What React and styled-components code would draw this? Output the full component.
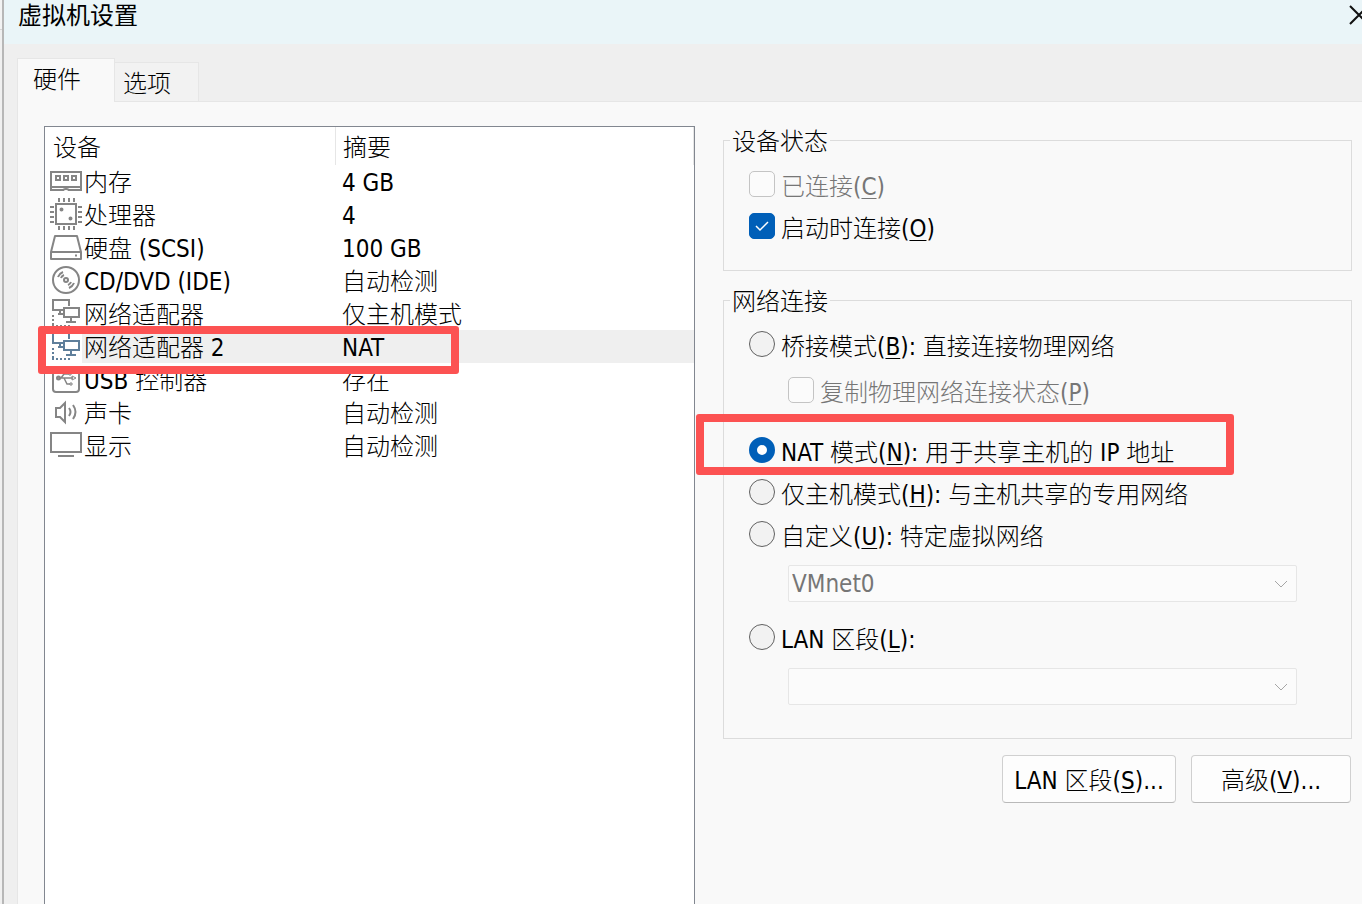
import React, { useState } from "react";
import styled, { createGlobalStyle, ThemeProvider } from "styled-components";

const theme = {
  text: "#000000",
  disabled: "#767676",
  icon: "#858585",
  iconActive: "#5f7f9b",
  accent: "#005fb8",
  panel: "#f9f9f9",
  chrome: "#efefef",
  line: "#dcdcdc",
  softLine: "#e6e6e6",
  mark: "#fc5252"
};

const GlobalStyle = createGlobalStyle`
  * {
    box-sizing: border-box;
  }
  body {
    margin: 0;
    color: ${theme.text};
    font-family: "Noto Sans CJK SC Light", "Noto Sans CJK SC", sans-serif;
    font-size: 24px;
    font-weight: 300;
    line-height: 32px;
  }
  button, select, input {
    font: inherit;
    color: inherit;
  }
`;

const Desktop = styled.div`
  display: flex;
  min-height: 100vh;
  background: #f0f0f0;
  overflow: hidden;
`;
const Backdrop = styled.div`
  width: 2px;
  height: 30px;
  background: #f3f3f3;
  border-bottom: 1px solid #d6d6d6;
`;
const Dialog = styled.main`
  display: flex;
  flex-direction: column;
  flex: 1;
  min-width: 0;
  border-left: 2px solid #b7b7b7;
  background: ${({ theme }) => theme.chrome};
`;
const TitleBar = styled.header`
  display: flex;
  align-items: flex-start;
  justify-content: space-between;
  height: 44px;
  padding-left: 14px;
  background: #eaf5f8;
`;
const Title = styled.h1`
  margin: 0;
  font-family: "Noto Sans CJK SC", sans-serif;
  font-size: 24px;
  font-weight: 400;
  line-height: 28px;
`;
const CloseButton = styled.button`
  display: flex;
  margin: 5px -7px 0 0;
  padding: 0;
  border: 0;
  background: none;
`;

const Tabs = styled.div`
  display: flex;
  align-items: flex-end;
  height: 57px;
  padding-left: 13px;
`;
const Tab = styled.button`
  position: relative;
  width: ${({ $active }) => ($active ? "98px" : "84px")};
  height: ${({ $active }) => ($active ? "44px" : "39px")};
  margin-bottom: ${({ $active }) => ($active ? "-1px" : "0")};
  padding: ${({ $active }) => ($active ? "0 0 5px 15px" : "0 0 0 8px")};
  border: 1px solid ${({ theme }) => theme.softLine};
  border-left-width: ${({ $active }) => ($active ? "1px" : "0")};
  border-bottom: 0;
  background: ${({ $active, theme }) => ($active ? theme.panel : "#f2f2f2")};
  text-align: left;
`;
const TabPanel = styled.section`
  display: grid;
  grid-template-columns: minmax(0, 651fr) minmax(0, 629fr);
  column-gap: 28px;
  flex: 1;
  margin-left: 13px;
  padding: 0 10px 0 26px;
  border: 1px solid ${({ theme }) => theme.softLine};
  border-width: 1px 0 0 1px;
  background: ${({ theme }) => theme.panel};
`;

const DeviceList = styled.div`
  margin-top: 24px;
  border: 1px solid #828790;
  border-bottom: 0;
  background: #ffffff;
`;
const DeviceTable = styled.table`
  width: 100%;
  border-collapse: separate;
  border-spacing: 0;
  table-layout: fixed;
`;
const HeadCell = styled.th`
  width: ${({ $width }) => $width || "auto"};
  height: 38px;
  padding: 0 0 0 ${({ $indent }) => $indent || "7px"};
  border-right: 1px solid ${({ theme }) => theme.softLine};
  font-weight: inherit;
  text-align: left;
`;
const DeviceCell = styled.td`
  position: relative;
  height: 33px;
  padding: 0 0 0 5px;
`;
const DeviceName = styled.div`
  display: flex;
  align-items: flex-start;
  height: 33px;
  white-space: nowrap;
`;
const DeviceLabel = styled.span`
  flex: 1;
  height: 33px;
  padding-left: 2px;
  background: ${({ $selected, theme }) => ($selected ? theme.chrome : "none")};
  line-height: 31px;
`;
const SummaryCell = styled.td`
  height: 33px;
  padding: 0 0 2px 6px;
  background: ${({ $selected, theme }) => ($selected ? theme.chrome : "none")};
  line-height: 31px;
`;
const Icon = styled.svg`
  flex: none;
  width: 32px;
  height: 32px;
  fill: none;
  stroke: ${({ $selected, theme }) =>
    $selected ? theme.iconActive : theme.icon};
  stroke-width: 2;
`;

const Settings = styled.div`
  display: flex;
  flex-direction: column;
  gap: 13px;
  padding-top: 22px;
`;
const Group = styled.fieldset`
  min-width: 0;
  margin: 0;
  padding: 0 54px ${({ $bottom }) => $bottom} 6px;
  border: 1px solid ${({ theme }) => theme.line};
`;
const Legend = styled.legend`
  height: 32px;
  padding: 0 2px;
`;
const GroupBody = styled.div`
  padding: 7px 0 0 19px;
`;
const Option = styled.div`
  position: relative;
  display: flex;
  align-items: center;
  height: 42px;
  margin-top: ${({ $gap }) => $gap || "0"};
  padding-left: ${({ $nested }) => ($nested ? "39px" : "0")};
  color: ${({ $disabled, theme }) => ($disabled ? theme.disabled : "inherit")};
  white-space: nowrap;

  label {
    padding: 2px 0 0 6px;
  }
`;
const Radio = styled.input.attrs({ type: "radio" })`
  appearance: none;
  flex: none;
  width: 26px;
  height: 26px;
  margin: 0;
  border: 1px solid #616161;
  border-radius: 50%;
  background: #f2f2f2;

  &:checked {
    border: 8px solid ${({ theme }) => theme.accent};
    background: #ffffff;
  }
`;
const CheckWrap = styled.span`
  display: grid;
  flex: none;

  > * {
    grid-area: 1 / 1;
  }
  svg {
    pointer-events: none;
  }
`;
const Checkbox = styled.input.attrs({ type: "checkbox" })`
  appearance: none;
  width: 26px;
  height: 26px;
  margin: 0;
  border: 1px solid #8a8a8a;
  border-radius: 5px;
  background: #fbfbfb;

  &:disabled {
    border-color: #c4c4c4;
  }
  &:checked {
    border-color: ${({ theme }) => theme.accent};
    background: ${({ theme }) => theme.accent};
  }
`;
const SelectWrap = styled.div`
  display: grid;
  align-items: center;
  margin: 10px 0 ${({ $bottom }) => $bottom || "0"} 39px;

  > * {
    grid-area: 1 / 1;
  }
  svg {
    justify-self: end;
    margin-right: 9px;
    pointer-events: none;
  }
`;
const Select = styled.select`
  appearance: none;
  width: 100%;
  height: 37px;
  padding: 1px 32px 0 3px;
  border: 1px solid ${({ theme }) => theme.softLine};
  border-radius: 2px;
  background: #fbfbfb;
  color: ${({ theme }) => theme.disabled};
  font-family: "DejaVu Sans Condensed", "DejaVu Sans", sans-serif;
  font-weight: 400;
  opacity: 1;
`;
const Actions = styled.div`
  display: flex;
  justify-content: flex-end;
  gap: 15px;
  margin-top: 3px;
  padding-right: 1px;
`;
const ActionButton = styled.button`
  width: ${({ $width }) => $width};
  height: 48px;
  padding: 0;
  border: 1px solid #d0d0d0;
  border-bottom-color: #b9b9b9;
  border-radius: 4px;
  background: #fdfdfd;
  white-space: nowrap;
`;
const Mark = styled.span`
  position: absolute;
  z-index: 1;
  top: ${({ $top }) => $top};
  left: ${({ $left }) => $left};
  width: ${({ $width }) => $width};
  height: ${({ $height }) => $height};
  border: 8px solid ${({ theme }) => theme.mark};
  border-radius: 3px;
  pointer-events: none;
`;
const Latin = styled.span`
  font-family: "DejaVu Sans Condensed", "DejaVu Sans", sans-serif;
  font-weight: 400;
  line-height: 1;
`;
const Mnemonic = styled.u`
  text-decoration-thickness: 1px;
  text-underline-offset: 3px;
`;

// "&X" marks X as the access key, as in Windows resource strings
const Caption = ({ text }) =>
  text.split(/([\x20-\x7e]+)/).map((run, i) => {
    if (!run || i % 2 === 0) return run;
    const [before, after] = run.split("&");
    return (
      <Latin key={i}>
        {before}
        {after && <Mnemonic>{after[0]}</Mnemonic>}
        {after && after.slice(1)}
      </Latin>
    );
  });

const icons = {
  memory: (
    <>
      <path d="M13 25H1V7h30v18H19" />
      <path d="M6 11h4v4H6zM14 11h4v4h-4zM22 11h4v4h-4z" />
      <path d="M2 22h28M13 26q0-2 3-2t3 2" />
    </>
  ),
  cpu: (
    <>
      <path d="M6 6h20v20H6z" />
      <path d="M9 0v4M14 0v4M19 0v4M24 0v4M9 28v4M14 28v4M19 28v4M24 28v4" />
      <path d="M0 9h4M0 14h4M0 19h4M0 24h4M28 9h4M28 14h4M28 19h4M28 24h4" />
      <circle cx="11.500" cy="11.500" r="1" />
      <circle cx="20.500" cy="20.500" r="1" />
    </>
  ),
  disk: (
    <path d="M5 5h22l4 16v7H1v-7zM1 21h30M25 24.500h2" strokeLinejoin="round" />
  ),
  disc: (
    <>
      <circle cx="16" cy="16" r="13" />
      <circle cx="16" cy="16" r="2" />
      <path d="M8 13a9 9 0 015-5M24 19a9 9 0 01-5 5M11 14a5 5 0 013-3M21 18a5 5 0 01-3 3" />
    </>
  ),
  network: (
    <>
      <path d="M13 13H3V3h16v6M10 13v4M8 17h7" />
      <path d="M14 11h15v9H14zM21 20v5M16 25h10" />
      <path d="M3 18v12M2 29h18" strokeDasharray="2 2" />
    </>
  ),
  usb: (
    <>
      <rect x="3" y="4" width="26" height="25" rx="3" />
      <path d="M8 15h15M11 15l3-4h5M14 15l3 6h3" strokeWidth="1.500" />
      <path d="M22 13l4 2-4 2zM19 10h2v2h-2zM20 20h2v2h-2z" strokeWidth="1" />
      <circle cx="8.500" cy="15" r="1.500" />
    </>
  ),
  sound: (
    <>
      <path d="M6 12h4l5-5v19l-5-5H6z" />
      <path d="M19 12q3 4 0 8M23 9q5 7 0 14" />
    </>
  ),
  display: (
    <>
      <path d="M1 4h30v19H1z" />
      <path d="M8 27h16" />
    </>
  )
};

const devices = [
  { icon: "memory", name: "内存", summary: "4 GB" },
  { icon: "cpu", name: "处理器", summary: "4" },
  { icon: "disk", name: "硬盘 (SCSI)", summary: "100 GB" },
  { icon: "disc", name: "CD/DVD (IDE)", summary: "自动检测" },
  { icon: "network", name: "网络适配器", summary: "仅主机模式" },
  { icon: "network", name: "网络适配器 2", summary: "NAT", selected: true },
  { icon: "usb", name: "USB 控制器", summary: "存在" },
  { icon: "sound", name: "声卡", summary: "自动检测" },
  { icon: "display", name: "显示", summary: "自动检测" }
];

const Device = ({ icon, name, summary, selected }) => (
  <tr aria-selected={selected}>
    <DeviceCell>
      <DeviceName>
        <Icon viewBox="0 0 32 32" $selected={selected} aria-hidden="true">
          {icons[icon]}
        </Icon>
        <DeviceLabel $selected={selected}>
          <Caption text={name} />
        </DeviceLabel>
      </DeviceName>
      {selected && <Mark $top="-4px" $left="-7px" $width="421px" $height="48px" />}
    </DeviceCell>
    <SummaryCell $selected={selected}>
      <Caption text={summary} />
    </SummaryCell>
  </tr>
);

const CheckOption = ({ id, text, checked, onChange, disabled, gap, nested }) => (
  <Option $disabled={disabled} $gap={gap} $nested={nested}>
    <CheckWrap>
      <Checkbox id={id} checked={checked} onChange={onChange} disabled={disabled} />
      {checked && (
        <svg width="26" height="26" fill="none" stroke="#ffffff" strokeWidth="1.500">
          <path d="M7 13l4 4 8-8" />
        </svg>
      )}
    </CheckWrap>
    <label htmlFor={id}>
      <Caption text={text} />
    </label>
  </Option>
);

const RadioOption = ({ id, text, mode, setMode, gap, children }) => (
  <Option $gap={gap}>
    <Radio id={id} name="mode" checked={mode === id} onChange={() => setMode(id)} />
    <label htmlFor={id}>
      <Caption text={text} />
    </label>
    {children}
  </Option>
);

const Dropdown = ({ label, value, bottom }) => (
  <SelectWrap $bottom={bottom}>
    <Select aria-label={label} disabled>
      <option>{value}</option>
    </Select>
    <svg width="14" height="8" fill="none" stroke="#a6a6a6" aria-hidden="true">
      <path d="M1 1l6 6 6-6" />
    </svg>
  </SelectWrap>
);

const App = () => {
  const [mode, setMode] = useState("nat");
  const [autoConnect, setAutoConnect] = useState(true);
  return (
    <ThemeProvider theme={theme}>
      <GlobalStyle />
      <Desktop>
        <Backdrop />
        <Dialog>
          <TitleBar>
            <Title>虚拟机设置</Title>
            <CloseButton aria-label="关闭">
              <svg width="20" height="20" fill="none" stroke="#111111" strokeWidth="2">
                <path d="M1 1l18 18M19 1L1 19" />
              </svg>
            </CloseButton>
          </TitleBar>
          <Tabs role="tablist">
            <Tab role="tab" aria-selected="true" $active>
              硬件
            </Tab>
            <Tab role="tab" aria-selected="false">
              选项
            </Tab>
          </Tabs>
          <TabPanel role="tabpanel">
            <DeviceList>
              <DeviceTable>
                <thead>
                  <tr>
                    <HeadCell $width="291px" $indent="8px">设备</HeadCell>
                    <HeadCell>摘要</HeadCell>
                  </tr>
                </thead>
                <tbody>
                  {devices.map(device => (
                    <Device key={device.name} {...device} />
                  ))}
                </tbody>
              </DeviceTable>
            </DeviceList>
            <Settings>
              <Group $bottom="23px">
                <Legend>设备状态</Legend>
                <GroupBody>
                  <CheckOption id="connected" text="已连接(&C)" checked={false} disabled />
                  <CheckOption
                    id="autoConnect"
                    text="启动时连接(&O)"
                    checked={autoConnect}
                    onChange={e => setAutoConnect(e.target.checked)}
                  />
                </GroupBody>
              </Group>
              <Group $bottom="33px">
                <Legend>网络连接</Legend>
                <GroupBody>
                  <RadioOption id="bridged" text="桥接模式(&B): 直接连接物理网络" mode={mode} setMode={setMode} />
                  <CheckOption id="replicate" text="复制物理网络连接状态(&P)" checked={false} gap="4px" disabled nested />
                  <RadioOption id="nat" text="NAT 模式(&N): 用于共享主机的 IP 地址" mode={mode} setMode={setMode} gap="18px">
                    <Mark $top="-15px" $left="-53px" $width="538px" $height="61px" />
                  </RadioOption>
                  <RadioOption id="hostOnly" text="仅主机模式(&H): 与主机共享的专用网络" mode={mode} setMode={setMode} />
                  <RadioOption id="custom" text="自定义(&U): 特定虚拟网络" mode={mode} setMode={setMode} />
                  <Dropdown label="特定虚拟网络" value="VMnet0" bottom="14px" />
                  <RadioOption id="lan" text="LAN 区段(&L):" mode={mode} setMode={setMode} />
                  <Dropdown label="LAN 区段" value="" />
                </GroupBody>
              </Group>
              <Actions>
                <ActionButton $width="174px">
                  <Caption text="LAN 区段(&S)..." />
                </ActionButton>
                <ActionButton $width="160px">
                  <Caption text="高级(&V)..." />
                </ActionButton>
              </Actions>
            </Settings>
          </TabPanel>
        </Dialog>
      </Desktop>
    </ThemeProvider>
  );
};

export default App;
